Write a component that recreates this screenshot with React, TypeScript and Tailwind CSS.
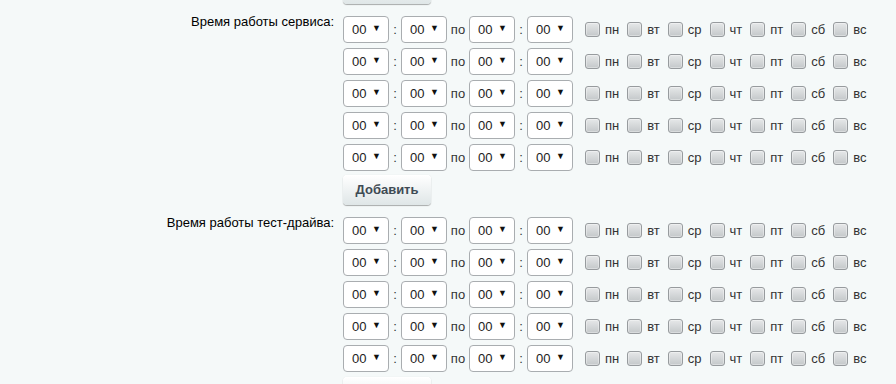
import React from 'react'

const days = ['пн', 'вт', 'ср', 'чт', 'пт', 'сб', 'вс']

const TimeSelect = () => (
  <div className="relative w-[46px] h-[27px] rounded-[4px] border border-[#a9adb0] bg-white">
    <select
      defaultValue="00"
      className="appearance-none w-full h-full bg-transparent pl-[8px] text-[13px] text-[#222] outline-none"
    >
      <option>00</option>
    </select>
    <span className="pointer-events-none absolute right-[7px] top-[7px] text-[9px] leading-none text-[#111]">▼</span>
  </div>
)

const Sep = ({ children, w }: { children: React.ReactNode; w: string }) => (
  <span className={`${w} text-center text-[13px] text-[#333]`}>{children}</span>
)

const DayCheck = ({ label }: { label: string }) => (
  <label className="flex items-center mr-[8px]">
    <span className="w-[15px] h-[15px] rounded-[3px] border border-[#979b9e] bg-gradient-to-b from-[#e6e8e9] to-[#c4c8ca] shadow-[inset_0_0_0_1px_rgba(255,255,255,0.35)]" />
    <span className="ml-[5px] text-[13px] text-[#333]">{label}</span>
  </label>
)

const TimeRow = () => (
  <div className="flex items-center h-[27px]">
    <TimeSelect />
    <Sep w="w-[12px]">:</Sep>
    <TimeSelect />
    <Sep w="w-[22px]">по</Sep>
    <TimeSelect />
    <Sep w="w-[12px]">:</Sep>
    <TimeSelect />
    <div className="flex items-center ml-[12px]">
      {days.map((d) => (
        <DayCheck key={d} label={d} />
      ))}
    </div>
  </div>
)

const btnCls =
  'h-[30px] w-[88px] rounded-[4px] bg-gradient-to-b from-[#ffffff] to-[#dfe6e7] text-[13px] font-bold text-[#3f4b54] shadow-[0_0_1px_rgba(0,0,0,0.15),0_1px_1px_rgba(0,0,0,0.3),inset_0_1px_0_#fff]'

// partially visible buttons at the page edges: label kept for a11y only
const EdgeButton = ({ className = '' }: { className?: string }) => (
  <button aria-label="Добавить" className={`${btnCls} block ${className}`} />
)

const Section = ({ title, last }: { title: string; last?: boolean }) => (
  <div className="flex">
    <div className="w-[335px] shrink-0 pt-[10px] pr-[1px] text-right text-[13px] leading-[16px] text-[#000]">
      {title}
    </div>
    <div className="ml-[8px] pt-[12px]">
      <div className="flex flex-col gap-[5px]">
        {[0, 1, 2, 3, 4].map((i) => (
          <TimeRow key={i} />
        ))}
      </div>
      {last ? (
        <EdgeButton className="mt-[5px]" />
      ) : (
        <button className={`${btnCls} mt-[4px]`}>Добавить</button>
      )}
    </div>
  </div>
)

export default function App() {
  return (
    <div
      className="w-[896px] h-[384px] overflow-hidden bg-[#f5f9f9]"
      style={{ fontFamily: '"Liberation Sans", Arial, sans-serif' }}
    >
      <div className="pl-[343px]">
        <EdgeButton className="-mt-[26px]" />
      </div>
      <Section title="Время работы сервиса:" />
      <Section title="Время работы тест-драйва:" last />
    </div>
  )
}
